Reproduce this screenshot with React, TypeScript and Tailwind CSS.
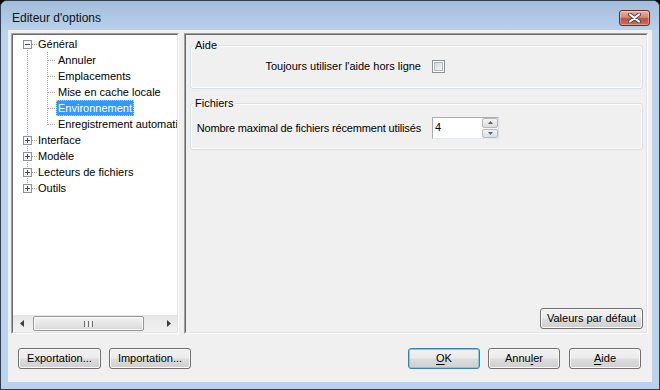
import type { ReactNode } from 'react';

type TreeRow = { label: string; level: 0 | 1; selected?: boolean };

const rows: TreeRow[] = [
  { label: 'Général', level: 0 },
  { label: 'Annuler', level: 1 },
  { label: 'Emplacements', level: 1 },
  { label: 'Mise en cache locale', level: 1 },
  { label: 'Environnement', level: 1, selected: true },
  { label: 'Enregistrement automatique', level: 1 },
  { label: 'Interface', level: 0 },
  { label: 'Modèle', level: 0 },
  { label: 'Lecteurs de fichiers', level: 0 },
  { label: 'Outils', level: 0 },
];

const rowCenter = (i: number) => 9 + 16 * i;

const TreeLines = () => {
  const roots = [0, 6, 7, 8, 9];
  return (
    <svg className="absolute left-0 top-0" width="164" height="200" shapeRendering="crispEdges">
      <g stroke="#a0a0a0" strokeWidth="1" strokeDasharray="1 1">
        <line x1="14.5" y1={rowCenter(0)} x2="14.5" y2={rowCenter(9)} />
        <line x1="34.5" y1="17" x2="34.5" y2={rowCenter(5) + 1} />
        {roots.map((i) => (
          <line key={`r${i}`} x1="19" y1={rowCenter(i) + 0.5} x2="24" y2={rowCenter(i) + 0.5} />
        ))}
        {[1, 2, 3, 4, 5].map((i) => (
          <line key={`c${i}`} x1="35" y1={rowCenter(i) + 0.5} x2="43" y2={rowCenter(i) + 0.5} />
        ))}
      </g>
      {roots.map((i) => {
        const c = rowCenter(i);
        return (
          <g key={`b${i}`}>
            <rect x="10.5" y={c - 3.5} width="8" height="8" fill="#f7f7f7" stroke="#919191" />
            <line x1="12" y1={c + 0.5} x2="17" y2={c + 0.5} stroke="#30507e" />
            {i !== 0 && <line x1="14.5" y1={c - 2} x2="14.5" y2={c + 3} stroke="#30507e" />}
          </g>
        );
      })}
    </svg>
  );
};

const Sunken = ({ className, children }: { className: string; children: ReactNode }) => (
  <div className={`border border-t-[#a0a0a0] border-l-[#a0a0a0] border-b-white border-r-white ${className}`}>
    <div className="h-full w-full border border-t-[#696969] border-l-[#696969] border-b-[#e3e3e3] border-r-[#e3e3e3]">
      {children}
    </div>
  </div>
);

const Button = ({ children, className, isDefault }: { children: ReactNode; className: string; isDefault?: boolean }) => (
  <div
    className={`h-[21px] flex items-center justify-center rounded-[3px] border leading-[13px] text-black whitespace-nowrap bg-[linear-gradient(#f2f2f2_0%,#ebebeb_48%,#dddddd_52%,#cfcfcf_100%)] ${
      isDefault
        ? 'border-[#3c7fb1] shadow-[inset_0_0_0_1px_#6fd0f7]'
        : 'border-[#707070] shadow-[inset_0_0_0_1px_#fafafa]'
    } ${className}`}
  >
    {children}
  </div>
);

const Tree = () => (
  <Sunken className="w-[168px] h-[301px] shrink-0">
    <div className="h-full w-full bg-white flex flex-col">
      <div className="relative flex-1 overflow-hidden pt-[1px]">
        <TreeLines />
        {rows.map((r) => (
          <div
            key={r.label}
            className={`relative h-[16px] flex items-center whitespace-nowrap ${r.level === 0 ? 'pl-[23px]' : 'pl-[43px]'}`}
          >
            <span
              className={
                r.selected
                  ? 'h-[16px] px-[1px] leading-[14px] bg-[#3399ff] text-white border border-dotted border-[#ffcc66]'
                  : 'h-[16px] px-[2px] leading-[16px]'
              }
            >
              {r.label}
            </span>
          </div>
        ))}
      </div>
      <div className="h-[17px] flex items-center bg-[linear-gradient(#e6e6e6,#f2f2f2)]">
        <div className="w-[17px] h-full flex items-center justify-center">
          <svg width="4" height="7" viewBox="0 0 4 7">
            <path d="M4 0 L0 3.5 L4 7 Z" fill="#3c3c3c" />
          </svg>
        </div>
        <div className="ml-[3px] w-[111px] h-[15px] rounded-[2px] border border-[#979797] bg-[linear-gradient(#f3f3f3,#e6e6e6_50%,#d9d9d9)] shadow-[inset_0_0_0_1px_#fbfbfb] flex items-center justify-center gap-[1px]">
          <span className="w-[1px] h-[6px] bg-[#6e6e6e]" />
          <span className="w-[1px] h-[6px] bg-white" />
          <span className="w-[1px] h-[6px] bg-[#6e6e6e]" />
          <span className="w-[1px] h-[6px] bg-white" />
          <span className="w-[1px] h-[6px] bg-[#6e6e6e]" />
        </div>
        <div className="ml-auto w-[17px] h-full flex items-center justify-center">
          <svg width="4" height="7" viewBox="0 0 4 7">
            <path d="M0 0 L4 3.5 L0 7 Z" fill="#3c3c3c" />
          </svg>
        </div>
      </div>
    </div>
  </Sunken>
);

const Group = ({ title, className, children }: { title: string; className: string; children: ReactNode }) => (
  <div className={`relative ml-[4px] mr-[3px] rounded-[3px] border border-[#d5dfe5] shadow-[inset_0_0_0_1px_#ffffff] ${className}`}>
    <span className="absolute left-[3px] top-[-7px] px-[1px] bg-[#f0f0f0] leading-[13px]">{title}</span>
    {children}
  </div>
);

const RightPanel = () => (
  <Sunken className="flex-1 h-[301px]">
    <div className="h-full w-full flex flex-col bg-[#f0f0f0]">
      <Group title="Aide" className="mt-[10px] h-[44px]">
        <div className="pt-[14px] flex items-center h-[27px]">
          <div className="w-[230px] flex justify-end whitespace-nowrap leading-[13px]">Toujours utiliser l'aide hors ligne</div>
          <div className="ml-[11px] w-[13px] h-[13px] border border-[#8e8f8f] bg-white p-[1px]">
            <div className="h-full w-full border border-[#b4b9bf] bg-[linear-gradient(135deg,#d4d7db,#f6f6f6)]" />
          </div>
        </div>
      </Group>
      <Group title="Fichiers" className="mt-[14px] h-[47px]">
        <div className="pt-[13px] flex items-center">
          <div className="w-[230px] flex justify-end whitespace-nowrap tracking-[-0.15px] leading-[13px] mt-[1px]">
            Nombre maximal de fichiers récemment utilisés
          </div>
          <div className="ml-[11px] w-[67px] h-[22px] border border-[#abadb3] border-b-[#e3e9ef] border-r-[#dbdfe6] bg-white flex">
            <span className="pl-[2px] pt-[1px] leading-[16px]">4</span>
            <div className="ml-auto w-[16px] flex flex-col gap-[1px]">
              <div className="flex-1 rounded-[2px] border border-[#b8b8b8] bg-[linear-gradient(#f4f4f4,#dedede)] flex items-center justify-center">
                <svg width="5" height="3" viewBox="0 0 5 3">
                  <path d="M0 3 L2.5 0 L5 3 Z" fill="#4d6185" />
                </svg>
              </div>
              <div className="flex-1 rounded-[2px] border border-[#b8b8b8] bg-[linear-gradient(#f4f4f4,#dedede)] flex items-center justify-center">
                <svg width="5" height="3" viewBox="0 0 5 3">
                  <path d="M0 0 L2.5 3 L5 0 Z" fill="#4d6185" />
                </svg>
              </div>
            </div>
          </div>
        </div>
      </Group>
      <Button className="mt-auto self-end mb-[3px] mr-[3px] w-[103px]">Valeurs par défaut</Button>
    </div>
  </Sunken>
);

export default function App() {
  return (
    <div className="w-[660px] h-[390px] bg-black font-['Liberation_Sans',Arial,sans-serif] text-[11px] text-black">
      <div className="w-full h-full flex flex-col rounded-t-[7px] border border-[#2f3e50] bg-[#bad2eb] overflow-hidden">
        <div className="h-[29px] flex items-start pl-[11px] pr-[9px] bg-[linear-gradient(#a2bddb,#b9d1ea)]">
          <span className="pt-[9px] text-[12px] leading-[16px] text-[#111]">Editeur d'options</span>
          <div className="ml-auto mt-[9px] w-[31px] h-[16px] rounded-[3px] border border-[#6b2a24] bg-[linear-gradient(#e9b1a8,#d48677_45%,#c2503f_55%,#cf6a56)] shadow-[inset_0_0_0_1px_rgba(255,255,255,0.35)] flex items-center justify-center">
            <svg width="13" height="10" viewBox="0 0 13 10">
              <path d="M2 1.5 L11 8.5 M11 1.5 L2 8.5" stroke="#4a4a4a" strokeWidth="4" strokeLinecap="round" />
              <path d="M2 1.5 L11 8.5 M11 1.5 L2 8.5" stroke="#ffffff" strokeWidth="2.2" strokeLinecap="round" />
            </svg>
          </div>
        </div>
        <div className="flex-1 mx-[7px] mb-[7px] bg-[#f0f0f0] flex flex-col">
          <div className="flex pt-[3px] pl-[3px] pr-[4px] gap-[5px]">
            <Tree />
            <RightPanel />
          </div>
          <div className="flex items-start pt-[14px] pl-[10px] pr-[11px]">
            <Button className="w-[83px]">Exportation...</Button>
            <Button className="ml-[8px] w-[82px]">Importation...</Button>
            <Button isDefault className="ml-auto w-[72px]">
              <span className="underline underline-offset-[2px]">O</span>K
            </Button>
            <Button className="ml-[8px] w-[72px]">
              Annu<span className="underline underline-offset-[2px]">l</span>er
            </Button>
            <Button className="ml-[9px] w-[72px]">
              <span className="underline underline-offset-[2px]">A</span>ide
            </Button>
          </div>
        </div>
      </div>
    </div>
  );
}
